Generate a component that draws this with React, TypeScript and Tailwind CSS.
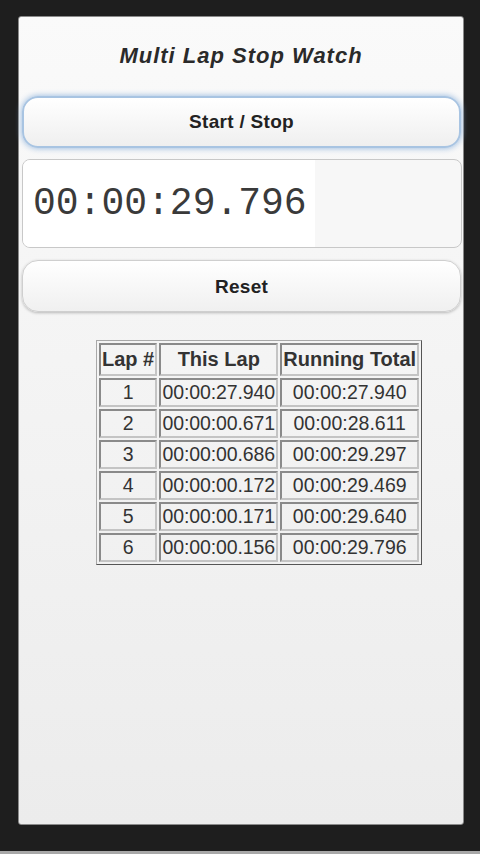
import React from "react";

const laps = [
  ["1", "00:00:27.940", "00:00:27.940"],
  ["2", "00:00:00.671", "00:00:28.611"],
  ["3", "00:00:00.686", "00:00:29.297"],
  ["4", "00:00:00.172", "00:00:29.469"],
  ["5", "00:00:00.171", "00:00:29.640"],
  ["6", "00:00:00.156", "00:00:29.796"],
];

const cell =
  "border-2 border-t-[#8a8a8a] border-l-[#8a8a8a] border-r-[#c4c4c4] border-b-[#c4c4c4] text-center p-0 px-[1px] whitespace-nowrap";

export default function App() {
  return (
    <div
      className="w-[480px] h-[854px] bg-[#1e1e1e] pt-[16px] pl-[18px] border-b-[3px] border-[#a8a8a8] box-border"
      style={{ fontFamily: '"Liberation Sans", Arial, sans-serif' }}
    >
      <div className="w-[446px] h-[809px] border border-[#8a8a8a] rounded-[3px] bg-gradient-to-b from-[#fafafa] to-[#ececec] px-[3px] box-border">
        <div className="pt-[27px] text-center text-[22px] leading-[24px] font-bold italic tracking-[1px] text-[#2a2a2a]">
          Multi Lap Stop Watch
        </div>
        <button className="mt-[28px] w-[439px] h-[52px] rounded-[16px] border-2 border-[#a8c4e2] bg-gradient-to-b from-[#ffffff] to-[#efefef] shadow-[0_0_6px_#8fb3dc] text-[19px] font-bold text-[#222] tracking-[0.3px] flex items-center justify-center">
          Start / Stop
        </button>
        <div className="mt-[11px] w-[440px] h-[89px] rounded-[8px] border border-[#c8c8c8] bg-[#f7f7f7] flex overflow-hidden box-border">
          <div
            className="w-[292px] h-full bg-white flex items-center pl-[10px] text-[38px] text-[#3a3a3a]"
            style={{ fontFamily: '"Liberation Mono", "Courier New", monospace' }}
          >
            00:00:29.796
          </div>
        </div>
        <button className="mt-[12px] w-[439px] h-[52px] rounded-[16px] border border-[#cfcfcf] bg-gradient-to-b from-[#ffffff] to-[#f0f0f0] shadow-[0_1px_3px_rgba(0,0,0,0.25)] text-[19px] font-bold text-[#222] tracking-[0.3px] flex items-center justify-center pt-[3px]">
          Reset
        </button>
        <table className="mt-[28px] ml-[74px] border-separate border-spacing-[2px] border border-t-[#a8a8a8] border-l-[#a8a8a8] border-r-[#555] border-b-[#555] text-[#333]">
          <thead>
            <tr>
              <th className={`${cell} w-[56px] font-bold text-[20px] leading-[29px]`}>Lap #</th>
              <th className={`${cell} w-[119px] font-bold text-[20px] leading-[29px]`}>This Lap</th>
              <th className={`${cell} w-[138px] font-bold text-[20px] leading-[29px]`}>Running Total</th>
            </tr>
          </thead>
          <tbody>
            {laps.map((r) => (
              <tr key={r[0]}>
                <td className={`${cell} text-[19.5px] leading-[25px]`}>{r[0]}</td>
                <td className={`${cell} text-[19.5px] leading-[25px] tracking-[-0.1px]`}>{r[1]}</td>
                <td className={`${cell} text-[19.5px] leading-[25px]`}>{r[2]}</td>
              </tr>
            ))}
          </tbody>
        </table>
      </div>
    </div>
  );
}
